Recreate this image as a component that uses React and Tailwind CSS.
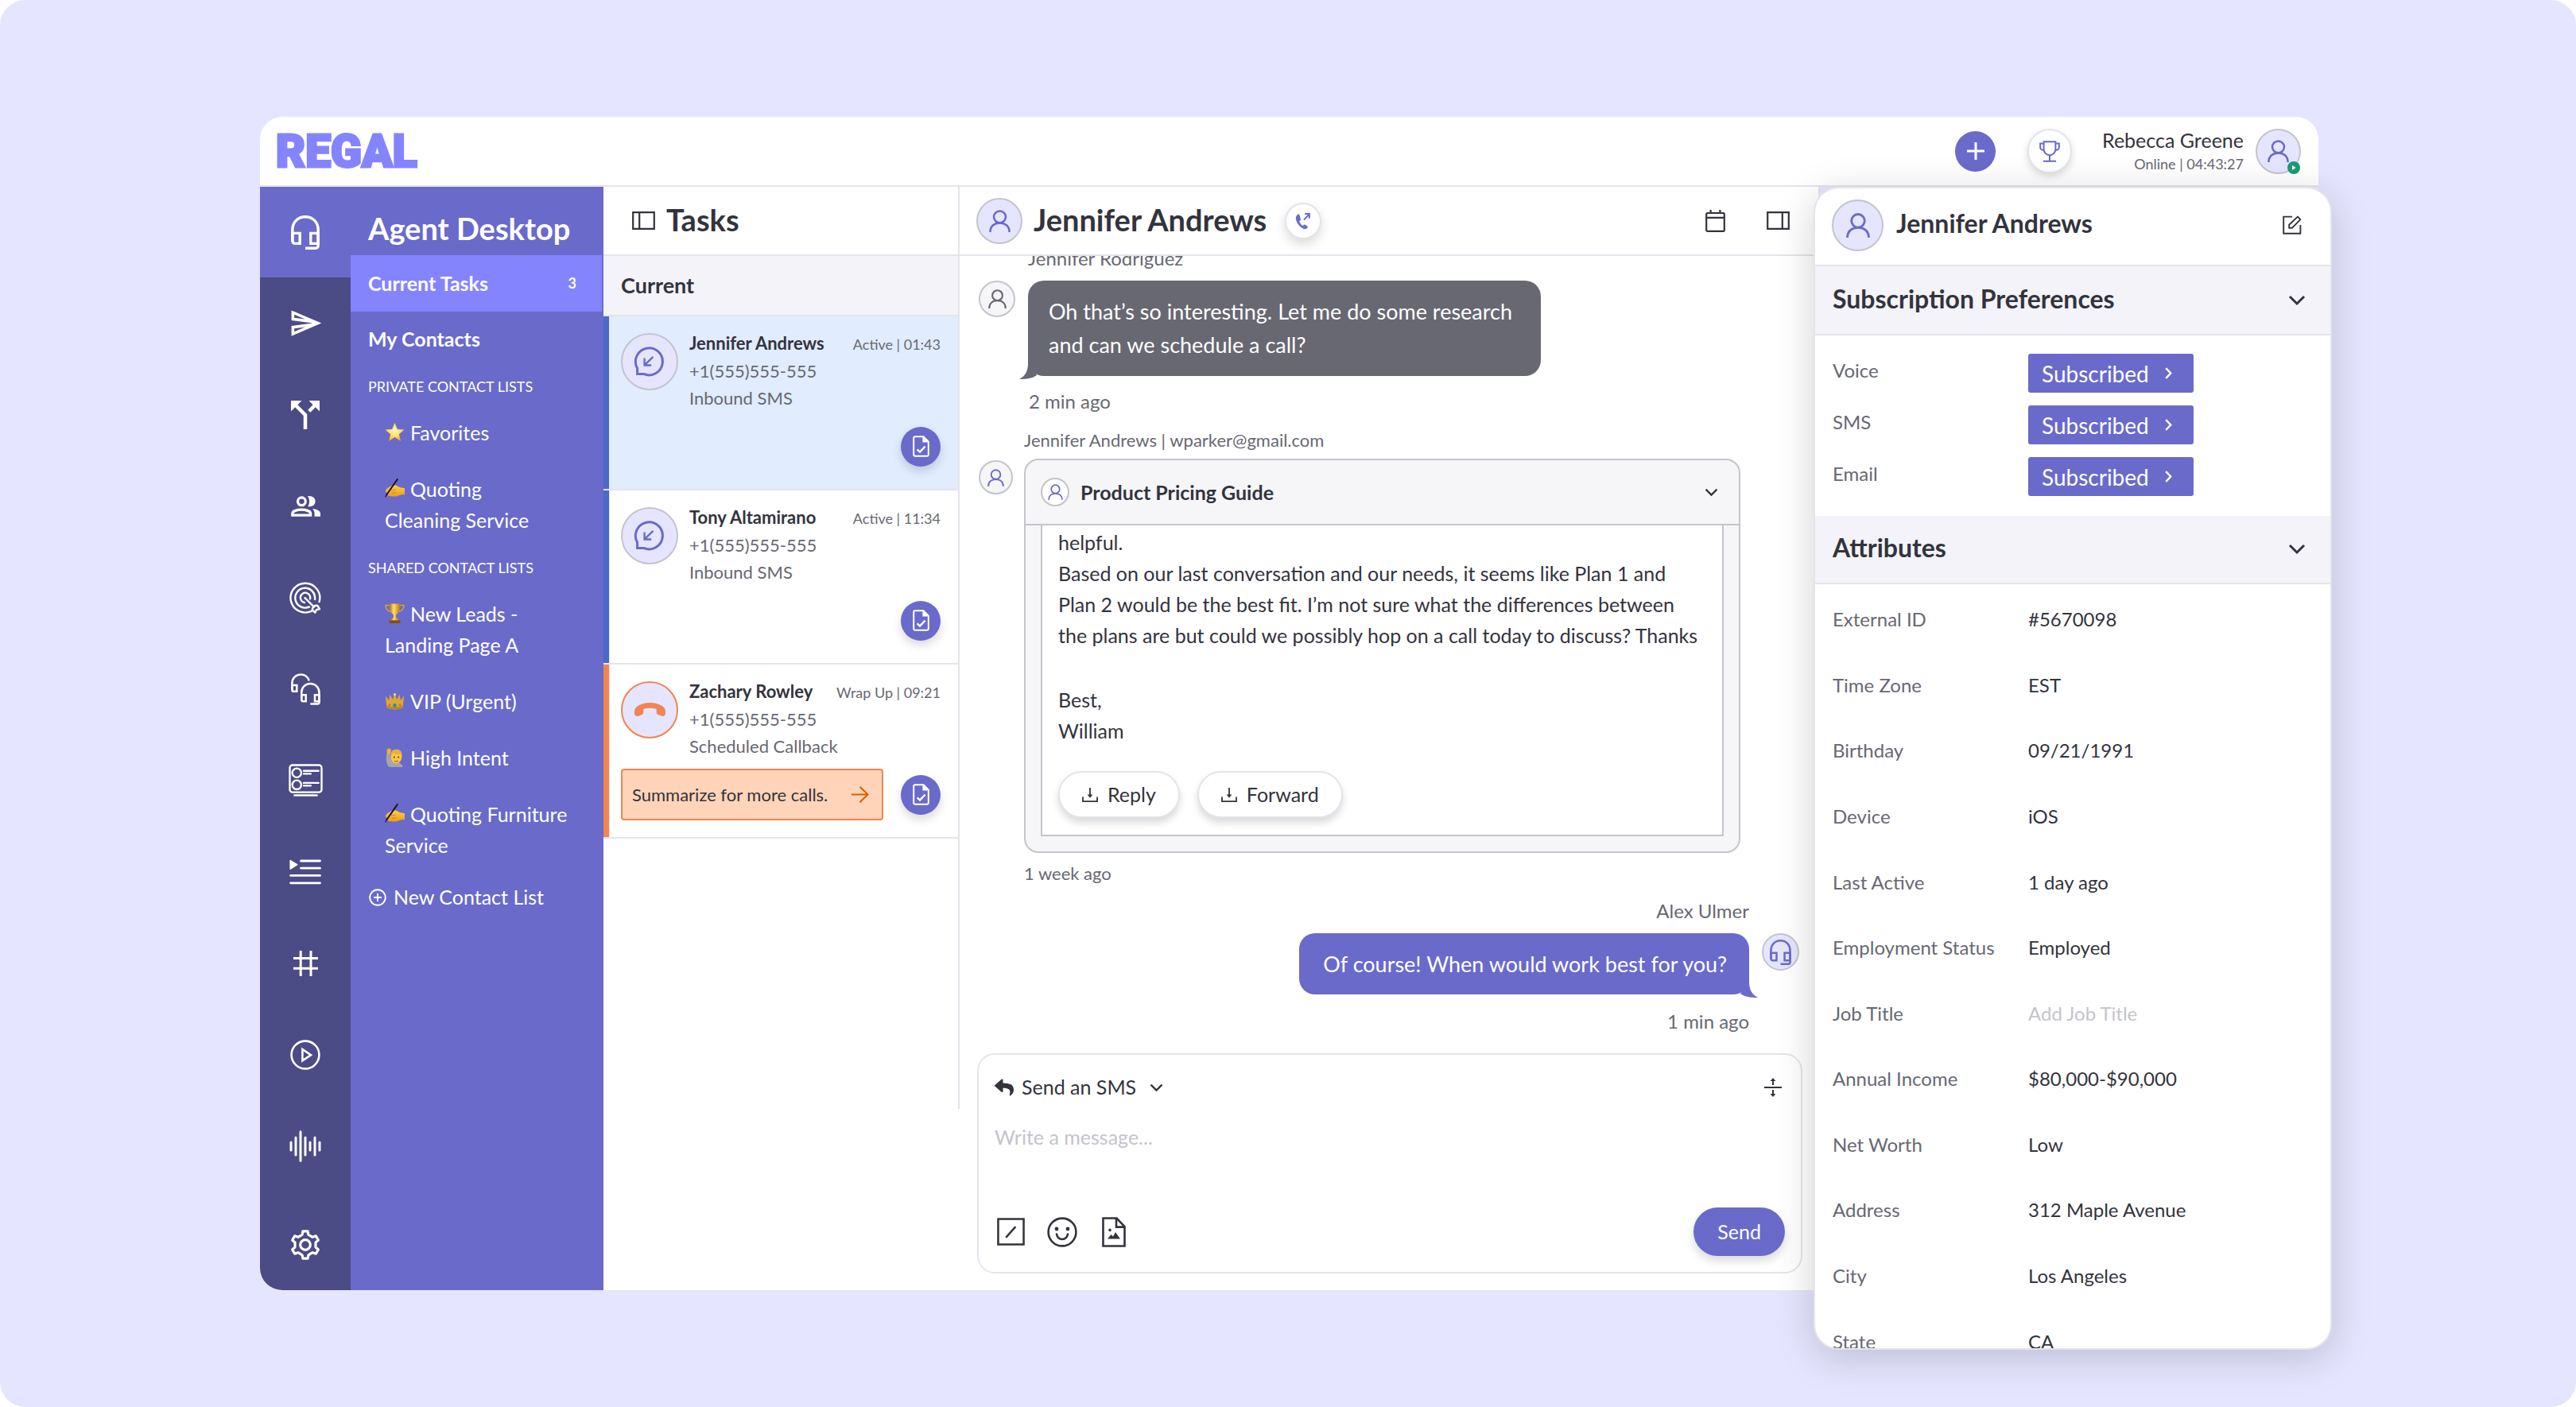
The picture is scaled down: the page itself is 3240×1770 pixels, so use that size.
import { useState } from "react";
import { MdCallSplit, MdOutlineSend } from "react-icons/md";
import { FaReply } from "react-icons/fa";

/* ---------- icons ---------- */

function PersonIcon({ className }) {
  return (
    <svg viewBox="0 0 30 31" fill="none" stroke="currentColor" strokeWidth="2.8" className={className}>
      <circle cx="15" cy="9.8" r="8.3" />
      <path d="M1.6 31C1.6 23 7 18.3 15 18.3S28.4 23 28.4 31" />
    </svg>
  );
}

function HeadsetIcon({ className }) {
  return (
    <svg viewBox="0 0 36 43" fill="none" stroke="currentColor" strokeWidth="3.4" className={className}>
      <path d="M1.8 33V18.5C1.8 8.5 8.5 1.8 18 1.8S34.2 8.5 34.2 18.5V38a3.2 3.2 0 0 1-3.2 3.2H18" />
      <path d="M2 22.4h9.2v13H5a3 3 0 0 1-3-3zM34 22.4h-9.2v13H34z" />
    </svg>
  );
}

function PeopleIcon({ className }) {
  return (
    <svg viewBox="0 0 37 26" fill="none" className={className}>
      <circle cx="13.4" cy="6.8" r="4.9" stroke="currentColor" strokeWidth="3.2" />
      <path d="M1.8 24.2v-2.4c0-3 6.4-4.6 11.4-4.6s11.4 1.6 11.4 4.6v2.4z" stroke="currentColor" strokeWidth="3.2" />
      <path d="M21 .2c6-.8 9.6 2.4 9.6 6.5s-3.6 7.3-9.6 6.5c2.8-3.8 2.8-9.2 0-13z" fill="currentColor" />
      <path d="M27 16c5.4.8 10 2.6 10 6v3.8h-7.4V22c0-2.4-1-4.4-2.6-6z" fill="currentColor" />
    </svg>
  );
}

function GearIcon({ className }) {
  return (
    <svg viewBox="0 0 36 36" fill="none" stroke="currentColor" strokeWidth="3" strokeLinejoin="round" className={className}>
      <path d="M14.3 5.9 15.1 1.8H20.9L21.7 5.9 26.6 8.8 30.6 7.4 33.5 12.4 30.3 15.2V20.8L33.5 23.6 30.6 28.6 26.6 27.2 21.7 30.1 20.9 34.2H15.1L14.3 30.1 9.4 27.2 5.4 28.6 2.5 23.6 5.7 20.8V15.2L2.5 12.4 5.4 7.4 9.4 8.8z" />
      <circle cx="18" cy="18" r="6" />
    </svg>
  );
}

function TargetIcon({ className }) {
  return (
    <svg viewBox="0 0 40 40" fill="none" stroke="currentColor" strokeWidth="2.4" strokeLinecap="round" className={className}>
      <path d="M28 36.6A18.4 18.4 0 1 1 37.6 25" />
      <path d="M25 31.4A12.4 12.4 0 1 1 32 22" />
      <path d="M19 26a6.2 6.2 0 1 1 7-4.6" />
      <path d="M19.5 20.2 31 31.5M31 31.5l-2 1.5v2.6l3.4 3 1.6-3.4 4-1-2.6-4.2-3-.4z" strokeLinejoin="round" />
    </svg>
  );
}

function HeadsetsIcon({ className }) {
  return (
    <svg viewBox="0 0 38 41" fill="none" stroke="currentColor" strokeWidth="2.6" className={className}>
      <path d="M1.5 22V12.5A11 11 0 0 1 12.5 1.5 11 11 0 0 1 23.4 9.5" />
      <path d="M1.5 15.4h6v8h-4a2 2 0 0 1-2-2z" />
      <path d="M13.6 34V24.6A11.4 11.4 0 0 1 25 13.2a11.4 11.4 0 0 1 11.4 11.4v12.8a2 2 0 0 1-2 2H25" />
      <path d="M13.6 28h5.6v8.2h-3.6a2 2 0 0 1-2-2zM36.4 28h-5.6v8.2h5.6z" />
    </svg>
  );
}

function FormIcon({ className }) {
  return (
    <svg viewBox="0 0 44 42" fill="none" stroke="currentColor" strokeWidth="2.4" strokeLinecap="round" className={className}>
      <rect x="1.5" y="1.5" width="41" height="35" rx="3.5" />
      <circle cx="10.5" cy="11.5" r="5.8" />
      <circle cx="10.5" cy="27" r="5.8" />
      <path d="M19.5 9h19M19.5 12.6h9M19.5 24.5h19M19.5 28h9M7.5 40.5h29" />
    </svg>
  );
}

function ListPlayIcon({ className }) {
  return (
    <svg viewBox="0 0 40 32" fill="none" stroke="currentColor" strokeWidth="2.8" strokeLinecap="round" className={className}>
      <path d="M14.5 2H38.5M14.5 11.2H38.5M1.6 20.4H38.5M1.6 29.8H38.5" />
      <path d="M1.2 1.6 9.6 6.8 1.2 12z" fill="currentColor" strokeWidth="1.6" strokeLinejoin="round" />
    </svg>
  );
}

function HashIcon({ className }) {
  return (
    <svg viewBox="0 0 31 32" fill="none" stroke="currentColor" strokeWidth="3" className={className}>
      <path d="M9.2 0v32M22 0v32M0 9.4h31M0 22.2h31" />
    </svg>
  );
}

function PlayIcon({ className }) {
  return (
    <svg viewBox="0 0 38 38" fill="none" stroke="currentColor" strokeWidth="2.6" className={className}>
      <circle cx="19" cy="19" r="17.4" />
      <path d="M15.4 12v14.4L26 19.2z" />
    </svg>
  );
}

function WaveIcon({ className }) {
  return (
    <svg viewBox="0 0 40 40" fill="none" stroke="currentColor" strokeWidth="3" strokeLinecap="round" className={className}>
      <path d="M2 15v10M8 9v22M14 1.8v36.4M20 9v22M26 15v10M32 9v22M38 15v10" />
    </svg>
  );
}

function PanelIcon({ className, side = "left" }) {
  return (
    <svg viewBox="0 0 29 23" fill="none" stroke="currentColor" strokeWidth="2.2" className={className}>
      <path d="M1.2 1.2h26.6v20.6H1.2z" />
      <path d={side === "left" ? "M9.2 1v21" : "M19.8 1v21"} />
    </svg>
  );
}

function CalendarIcon({ className }) {
  return (
    <svg viewBox="0 0 25 28" fill="none" stroke="currentColor" strokeWidth="2.2" className={className}>
      <rect x="1.2" y="4" width="22.6" height="22.8" rx="1.4" />
      <path d="M1 9.8h23M6.6 0v4M18.4 0v4" />
    </svg>
  );
}

function ChevronDown({ className }) {
  return (
    <svg viewBox="0 0 22 14" fill="none" stroke="currentColor" strokeWidth="3" className={className}>
      <path d="m2 2 9 9 9-9" />
    </svg>
  );
}

function ChevronRight({ className }) {
  return (
    <svg viewBox="0 0 9 15" fill="none" stroke="currentColor" strokeWidth="2.4" className={className}>
      <path d="m1.2 1.2 6 6.3-6 6.3" />
    </svg>
  );
}

function SmsInIcon({ className }) {
  return (
    <svg viewBox="0 0 40 40" fill="none" stroke="currentColor" strokeWidth="3" className={className}>
      <path d="M4.6 35.4V28.2A17 17 0 1 1 12.6 35.4z" />
      <path d="M24.5 13.8 13.6 24.4M13.6 15.6v8.9h8.6" strokeWidth="2.4" />
    </svg>
  );
}

function HangUpIcon({ className }) {
  return (
    <svg viewBox="0 0 39 18" fill="currentColor" className={className}>
      <path d="M0 11C0 4 10 0 19.5 0S39 4 39 11v2.5c0 2.2-2 3.8-4.500 3.300l-5-1.800c-1.500-.6-1.800-2-1.800-3.500V8c-5-1.600-11.400-1.600-16.400 0v3.500c0 1.500-.3 2.900-1.800 3.500l-5 2C2 17.500 0 15.700 0 13.500z" />
    </svg>
  );
}

function DocCheckIcon({ className }) {
  return (
    <svg viewBox="0 0 21 27" fill="none" stroke="currentColor" strokeWidth="2" className={className}>
      <path d="M3 1.2h10.5L19.8 7.6V24a1.8 1.8 0 0 1-1.8 1.8H3A1.8 1.8 0 0 1 1.2 24V3A1.8 1.8 0 0 1 3 1.2z" />
      <path d="M12.4 1.2v7.4h7.4z" fill="currentColor" stroke="none" />
      <path d="m5.6 17.4 3.4 3.2 6.6-7" strokeWidth="2.4" />
    </svg>
  );
}

function PhoneOutIcon({ className }) {
  return (
    <svg viewBox="0 0 22 24" fill="none" className={className}>
      <path
        d="M3.2 3.2C.6 5.4.2 8.4 1.8 12.4c2 4.8 5.2 8.4 9.4 10.4 2.8 1 4.8.6 6-1.6.4-1 .2-1.6-.6-2.2l-2.8-1.8c-.8-.4-1.6-.2-2.2.4l-1 1.2c-2.4-1.6-4-3.8-5-6.4l1.3-.9c.7-.6 1-1.2.7-2L6.3 4.4c-.5-1.4-1.7-2.2-3.1-1.2z"
        fill="currentColor"
      />
      <path d="m12 10.5 7-7.5M13.4 2h6.2v6.4" stroke="currentColor" strokeWidth="2.2" />
    </svg>
  );
}

function TrophyIcon({ className }) {
  return (
    <svg viewBox="0 0 26 27" fill="none" stroke="currentColor" strokeWidth="2" className={className}>
      <path d="M5.6 1.2h14.8v9.6a7.4 7.4 0 0 1-14.8 0z" />
      <path d="M5.6 3.4H1.2v5.2c0 1.8 1.8 3.2 4.6 3.6M20.4 3.4h4.4v5.2c0 1.8-1.8 3.2-4.6 3.6M13 18.4v7M5 25.8h16" />
    </svg>
  );
}

function EditIcon({ className }) {
  return (
    <svg viewBox="0 0 24 24" fill="none" stroke="currentColor" strokeWidth="1.9" className={className}>
      <path d="M12 1.6H1.2v21.2h21.2V12" />
      <path d="M8.2 15.8v-4L19 1.6l3.4 3.6-10.6 10.6z" strokeLinejoin="round" />
    </svg>
  );
}

function TrayIcon({ className }) {
  return (
    <svg viewBox="0 0 20 18" fill="none" stroke="currentColor" strokeWidth="1.8" className={className}>
      <path d="M1 11.5v5.6h18v-5.6M10 0v11" />
      <path d="M6.6 8.6h6.8L10 12.8z" fill="currentColor" stroke="none" />
    </svg>
  );
}

function ExpandIcon({ className }) {
  return (
    <svg viewBox="0 0 22 24" fill="none" stroke="currentColor" strokeWidth="2" className={className}>
      <path d="M0 12h22M11 2v7M11 15v7" />
      <path d="M11 0 7.6 4h6.8zM11 24l-3.4-4h6.8z" fill="currentColor" stroke="none" />
    </svg>
  );
}

function SlashIcon({ className }) {
  return (
    <svg viewBox="0 0 36 36" fill="none" stroke="currentColor" strokeWidth="2.6" className={className}>
      <path d="M1.5 1.5h33v33h-33zM11.5 25.5l12.5-14" />
    </svg>
  );
}

function SmileIcon({ className }) {
  return (
    <svg viewBox="0 0 38 38" fill="none" stroke="currentColor" strokeWidth="2.6" className={className}>
      <circle cx="19" cy="19" r="17.4" />
      <path d="M12 21.5c.8 4.4 3.4 6.5 7 6.5s6.2-2.1 7-6.5" strokeLinecap="round" />
      <circle cx="12" cy="15" r="2.4" fill="currentColor" stroke="none" />
      <circle cx="26" cy="15" r="2.4" fill="currentColor" stroke="none" />
    </svg>
  );
}

function ImageFileIcon({ className }) {
  return (
    <svg viewBox="0 0 30 38" fill="none" stroke="currentColor" strokeWidth="2.6" className={className}>
      <path d="M1.5 1.5h17L28.5 12v24.5h-27zM18 1.5V12.6h10.5" />
      <path d="M7 27.5 11.5 22l2.5 2.5 3-5.5 6 8.5z" fill="currentColor" stroke="none" />
      <circle cx="10" cy="16.4" r="1.8" fill="currentColor" stroke="none" />
    </svg>
  );
}

function ArrowRightIcon({ className }) {
  return (
    <svg viewBox="0 0 22 21" fill="none" stroke="currentColor" strokeWidth="2" className={className}>
      <path d="M0 10.5h20.5M10.5.8l10 9.7-10 9.7" />
    </svg>
  );
}

function PlusCircleIcon({ className }) {
  return (
    <svg viewBox="0 0 22 22" fill="none" stroke="currentColor" strokeWidth="1.9" className={className}>
      <circle cx="11" cy="11" r="9.8" />
      <path d="M11 6v10M6 11h10" />
    </svg>
  );
}

/* ---------- list emblems ---------- */

function StarEmblem() {
  return (
    <svg viewBox="0 0 25 25" className="size-[25px]">
      <defs>
        <radialGradient id="star" cx="50%" cy="42%" r="60%">
          <stop offset="0" stopColor="#FFF9C4" />
          <stop offset=".55" stopColor="#FFDF5A" />
          <stop offset="1" stopColor="#F2A516" />
        </radialGradient>
      </defs>
      <path d="m12.5.8 3.3 8.3 8.9.5-6.9 5.7 2.3 8.7-7.6-4.9L4.9 24l2.3-8.7L.3 9.6l8.9-.5z" fill="url(#star)" />
    </svg>
  );
}

function WritingEmblem() {
  return (
    <svg viewBox="0 0 25 25" className="size-[25px]">
      <defs>
        <linearGradient id="hand" x1="0" y1="0" x2="0" y2="1">
          <stop offset="0" stopColor="#FFD04A" />
          <stop offset="1" stopColor="#EE9A1B" />
        </linearGradient>
      </defs>
      <path d="M.8 15.5C1.8 12.8 5 10.8 8.5 9.2l3.5-.6c1.8-.4 3.4.4 4.6 1.4 2.2 1.2 5.4 1.800 8.400 2.200v8.200c-3.600-.2-6.200.4-8.800 1.600-3.600 1-8.400.6-12-.6z" fill="url(#hand)" />
      <path d="M8 14.5c2 .5 4 .2 6-.8M8.5 18c2.500.4 4.500 0 6-1" stroke="#C9780F" strokeWidth=".8" fill="none" />
      <path d="M15.8 1 2.5 20" stroke="#14141A" strokeWidth="2" strokeLinecap="round" />
      <path d="M2.6 19.5.8 23" stroke="#14141A" strokeWidth="1.2" strokeLinecap="round" />
    </svg>
  );
}

function CupEmblem() {
  return (
    <svg viewBox="0 0 25 25" className="size-[25px]">
      <defs>
        <linearGradient id="cup" x1="0" x2="1">
          <stop offset="0" stopColor="#A96A08" />
          <stop offset=".4" stopColor="#FFDE6B" />
          <stop offset="1" stopColor="#B87708" />
        </linearGradient>
      </defs>
      <path d="M6 2.5H1C1 7 3.5 10 9 10.5M19 2.5h5C24 7 21.5 10 16 10.5" fill="none" stroke="#E0A52B" strokeWidth="1.4" />
      <path d="M5.5.5h14c0 7-1.5 11.5-5.5 14V19h-3v-4.500C7 12 5.500 7.500 5.500.5z" fill="url(#cup)" />
      <path d="M8.5 18.5h8l1 3h-10z" fill="url(#cup)" />
      <path d="M5.5 21.5h14V25h-14z" fill="#8C4A12" />
    </svg>
  );
}

function CrownEmblem() {
  return (
    <svg viewBox="0 0 25 25" className="size-[25px]">
      <path d="M.8 6.5 5.2 12 6.5 4.5 9.8 11l2.700-7 2.700 7 3.300-6.500L19.800 12l4.400-5.500-1.700 15c-6 2.600-14 2.600-20 0z" fill="#DBAA32" />
      <path d="M2.3 18.5c6 2.5 14.4 2.5 20.4 0v3c-6 2.6-14 2.6-20 0z" fill="#B98A20" />
      <circle cx="12.5" cy="4.8" r="1.7" fill="#F6D873" />
      <circle cx="12.5" cy="18.5" r="2.4" fill="#1F9C78" />
      <circle cx="6" cy="17.8" r="1.5" fill="#E0529B" />
      <circle cx="19" cy="17.8" r="1.5" fill="#E0529B" />
    </svg>
  );
}

function HandUpEmblem() {
  return (
    <svg viewBox="0 0 25 25" className="size-[25px]">
      <path d="M2.5 8C1 15 2 22 5.5 25h17c0-3.500-3-5-7-5.500C9 18.500 7 14 6.500 8z" fill="#A5A5AE" />
      <path d="M2.8 8.5 2.5 2l1.700 1L5 .2l1.300 2.400L8 2 7 8.500z" fill="#F2B430" />
      <ellipse cx="14.5" cy="12.5" rx="6.8" ry="7.8" fill="#FFC83D" />
      <path d="M7.4 12C6.8 5 10 2.8 14.5 2.8S22.200 5 21.600 12l-1.600-3.600c-3 1-7 .8-10-.5z" fill="#E9AE48" />
      <path d="M12 17.2c1.5.9 3.5.9 5 0" stroke="#8C4A12" strokeWidth="1" fill="none" />
      <circle cx="11.8" cy="12.5" r="1" fill="#4A2C12" />
      <circle cx="17.2" cy="12.5" r="1" fill="#4A2C12" />
    </svg>
  );
}

/* ---------- data ---------- */

const railItems = [
  { label: "Send", icon: MdOutlineSend, size: "size-[43px]" },
  { label: "Routing", icon: MdCallSplit, size: "size-[54px]" },
  { label: "Contacts", icon: PeopleIcon, size: "w-[37px] h-[26px]" },
  { label: "Campaigns", icon: TargetIcon, size: "size-10" },
  { label: "Agents", icon: HeadsetsIcon, size: "w-[37px] h-10" },
  { label: "Forms", icon: FormIcon, size: "w-[43px] h-[41px]" },
  { label: "Queue", icon: ListPlayIcon, size: "w-10 h-8" },
  { label: "Channels", icon: HashIcon, size: "w-[31px] h-8" },
  { label: "Recordings", icon: PlayIcon, size: "size-[38px]" },
  { label: "Voice", icon: WaveIcon, size: "size-10" },
];

const privateLists = [
  { name: "Favorites", emblem: StarEmblem },
  { name: "Quoting Cleaning Service", emblem: WritingEmblem, narrow: true },
];

const sharedLists = [
  { name: "New Leads - Landing Page A", emblem: CupEmblem, narrow: true },
  { name: "VIP (Urgent)", emblem: CrownEmblem },
  { name: "High Intent", emblem: HandUpEmblem },
  { name: "Quoting Furniture Service", emblem: WritingEmblem },
];

const tasks = [
  { name: "Jennifer Andrews", status: "Active | 01:43", kind: "Inbound SMS", selected: true },
  { name: "Tony Altamirano", status: "Active | 11:34", kind: "Inbound SMS" },
  { name: "Zachary Rowley", status: "Wrap Up | 09:21", kind: "Scheduled Callback", wrapUp: true },
];

const attributes = [
  ["External ID", "#5670098"],
  ["Time Zone", "EST"],
  ["Birthday", "09/21/1991"],
  ["Device", "iOS"],
  ["Last Active", "1 day ago"],
  ["Employment Status", "Employed"],
  ["Job Title", ""],
  ["Annual Income", "$80,000-$90,000"],
  ["Net Worth", "Low"],
  ["Address", "312 Maple Avenue"],
  ["City", "Los Angeles"],
  ["State", "CA"],
];

/* ---------- pieces ---------- */

function TopBar() {
  return (
    <header className="flex h-[88px] shrink-0 items-center rounded-t-[28px] border-b-2 border-[#E4E4EC] bg-white pr-[22px] pl-5">
      <h1 className="font-['Roboto',sans-serif] text-[57px] leading-none font-black text-[#8484FF] [-webkit-text-stroke:3px_#8484FF]">REGAL</h1>
      <div className="ml-auto flex items-center">
        <button type="button" aria-label="New" className="flex size-[51px] items-center justify-center rounded-full bg-[#6A6ACA] text-white">
          <svg viewBox="0 0 22 22" stroke="currentColor" strokeWidth="3" className="size-[22px]">
            <path d="M11 0v22M0 11h22" />
          </svg>
        </button>
        <button type="button" aria-label="Leaderboard" className="ml-10 flex size-14 items-center justify-center rounded-full border-2 border-[#E4E4EC] bg-white text-[#6A6ACA] shadow-[0_4px_10px_rgba(0,0,0,0.15)]">
          <TrophyIcon className="h-[27px] w-[26px]" />
        </button>
        <div className="ml-[38px] text-right">
          <p className="text-[25px] leading-8 text-[#33333D]">Rebecca Greene</p>
          <p className="text-[18px] leading-7 text-[#686872]">Online | 04:43:27</p>
        </div>
        <div className="relative ml-[15px] flex size-[57px] items-center justify-center rounded-full border-2 border-[#C4C4CC] bg-[#E5E5FF] text-[#6A6ACA]">
          <PersonIcon className="h-7 w-[27px]" />
          <span className="absolute -right-[1px] -bottom-[2px] flex size-4 items-center justify-center rounded-full bg-[#1A9C77]">
            <svg viewBox="0 0 6 6" fill="white" className="size-[6px]">
              <path d="M1 0v6l4.5-3z" />
            </svg>
          </span>
        </div>
      </div>
    </header>
  );
}

function Rail() {
  return (
    <nav aria-label="Main" className="flex w-[114px] shrink-0 flex-col rounded-bl-[28px] bg-[#4B4B85] text-white">
      <button type="button" aria-label="Agent Desktop" className="flex h-[114px] items-center justify-center bg-[#6A6ACA]">
        <HeadsetIcon className="h-[43px] w-9" />
      </button>
      {railItems.map(({ label, icon: Icon, size }) => (
        <button key={label} type="button" aria-label={label} className="flex h-[115px] items-center justify-center">
          <Icon className={size} />
        </button>
      ))}
      <button type="button" aria-label="Settings" className="mt-auto flex h-[115px] items-center justify-center">
        <GearIcon className="size-[38px]" />
      </button>
    </nav>
  );
}

function ContactList({ name, emblem: Emblem, narrow }) {
  return (
    <li>
      <a href="#list" className={`block py-4 pl-[43px] text-[25px] leading-[39px] ${narrow ? "pr-[70px]" : "pr-5"}`}>
        <span className="mr-[7px] inline-block align-[-2px]">
          <Emblem />
        </span>
        {name}
      </a>
    </li>
  );
}

function ListPanel() {
  return (
    <div className="w-[318px] shrink-0 bg-[#6A6ACA] text-white">
      <h2 className="flex h-[86px] items-center pt-[18px] pl-[22px] text-[38px] leading-none font-bold">Agent Desktop</h2>
      <a href="#current" className="mr-[2px] flex h-[71px] items-center justify-between bg-[#8484FF] pr-8 pl-[22px] text-[25px] font-bold">
        Current Tasks
        <span className="text-[18px]">3</span>
      </a>
      <a href="#contacts" className="flex h-[70px] items-center pl-[22px] text-[25px] font-bold">
        My Contacts
      </a>
      <h3 className="flex h-[47px] items-center pt-[2px] pl-[22px] text-[18px]">PRIVATE CONTACT LISTS</h3>
      <ul>
        {privateLists.map((list) => (
          <ContactList key={list.name} {...list} />
        ))}
      </ul>
      <h3 className="flex h-[47px] items-center pt-[2px] pl-[22px] text-[18px]">SHARED CONTACT LISTS</h3>
      <ul>
        {sharedLists.map((list) => (
          <ContactList key={list.name} {...list} />
        ))}
      </ul>
      <button type="button" className="flex h-[60px] items-center gap-[9px] pl-[23px] text-[25px]">
        <PlusCircleIcon className="size-[22px]" />
        New Contact List
      </button>
    </div>
  );
}

function Task({ name, status, kind, selected, wrapUp }) {
  return (
    <li className={`flex h-[219px] border-b-2 border-[#E4E4EC] ${selected ? "bg-[#E1ECFF]" : "bg-white"}`}>
      <div className={`w-2 shrink-0 border-r border-[#E4E4EC] ${wrapUp ? "bg-[#F28452]" : "bg-[#4B69CA]"}`} />
      <div className="flex flex-1 flex-col pt-[17px] pr-[22px] pb-[21px] pl-[14px]">
        <div className="flex">
          <div
            className={`mt-1 flex size-[72px] shrink-0 items-center justify-center rounded-full border-2 bg-[#E5E5FF] ${
              wrapUp ? "border-[#F28452] text-[#F28452]" : "border-[#C4C4CC] text-[#6A6ACA]"
            }`}
          >
            {wrapUp ? <HangUpIcon className="h-[18px] w-[39px]" /> : <SmsInIcon className="size-10" />}
          </div>
          <div className="ml-[14px] flex-1 text-[22px] leading-[34px] text-[#686872]">
            <div className="flex items-baseline justify-between">
              <h4 className="font-bold text-[#33333D]">{name}</h4>
              <span className="text-[18px]">{status}</span>
            </div>
            <p>+1(555)555-555</p>
            <p>{kind}</p>
          </div>
        </div>
        <div className="mt-auto flex h-[65px] items-center justify-end gap-[22px]">
          {wrapUp && (
            <button type="button" className="flex h-full flex-1 items-center justify-between rounded-sm border-2 border-[#F28452] bg-[#FFD4B8] pr-4 pl-3 text-[22px] text-[#33333D]">
              Summarize for more calls.
              <ArrowRightIcon className="h-[21px] w-[22px] text-[#D95F00]" />
            </button>
          )}
          <button type="button" aria-label={`Complete ${name}`} className="flex size-[50px] items-center justify-center rounded-full bg-[#6A6ACA] text-white shadow-[0_6px_12px_rgba(0,0,0,0.15)]">
            <DocCheckIcon className="h-[27px] w-[21px]" />
          </button>
        </div>
      </div>
    </li>
  );
}

function TaskColumn() {
  return (
    <section className="w-[448px] shrink-0 bg-white">
      <div className="min-h-[1160px] border-r-2 border-[#E4E4EC]">
        <div className="flex h-[87px] items-center border-b-2 border-[#E4E4EC] pl-9">
          <button type="button" aria-label="Collapse tasks">
            <PanelIcon className="h-[23px] w-[29px]" />
          </button>
          <h2 className="ml-[14px] pb-1 text-[38px] leading-none font-bold">Tasks</h2>
        </div>
        <h3 className="flex h-[76px] items-center border-b-2 border-[#E4E4EC] bg-[#F3F3F9] pl-[22px] text-[27px] font-bold">Current</h3>
        <ul>
          {tasks.map((task) => (
            <Task key={task.name} {...task} />
          ))}
        </ul>
      </div>
    </section>
  );
}

function ChatHeader() {
  return (
    <div className="flex h-[87px] shrink-0 items-center border-b-2 border-[#E4E4EC] pr-9 pl-[21px]">
      <div className="flex size-[58px] items-center justify-center rounded-full border-2 border-[#C4C4CC] bg-[#E5E5FF] text-[#6A6ACA]">
        <PersonIcon className="h-7 w-[27px]" />
      </div>
      <h2 className="ml-[14px] pb-1 text-[38px] leading-none font-bold">Jennifer Andrews</h2>
      <button type="button" aria-label="Call" className="ml-[23px] flex size-[46px] items-center justify-center rounded-full border-2 border-[#E4E4EC] bg-white text-[#6A6ACA] shadow-[0_6px_14px_rgba(0,0,0,0.15)]">
        <PhoneOutIcon className="h-[22px] w-5" />
      </button>
      <button type="button" aria-label="Schedule" className="ml-auto">
        <CalendarIcon className="h-7 w-[25px]" />
      </button>
      <button type="button" aria-label="Toggle details" className="ml-[52px]">
        <PanelIcon side="right" className="h-[23px] w-[29px]" />
      </button>
    </div>
  );
}

function EmailCard() {
  return (
    <article className="mr-[74px] flex-1 rounded-[18px] border-2 border-[#C4C4CC] bg-[#F6F6F9]">
      <header className="flex h-[82px] items-center border-b-2 border-[#C4C4CC] pr-[26px] pl-[19px]">
        <div className="flex size-9 items-center justify-center rounded-full border-2 border-[#C4C4CC] bg-white text-[#6A6ACA]">
          <PersonIcon className="h-5 w-[19px]" />
        </div>
        <h3 className="ml-[14px] text-[25px] font-bold">Product Pricing Guide</h3>
        <button type="button" aria-label="Collapse email" className="ml-auto">
          <ChevronDown className="h-[11px] w-[17px]" />
        </button>
      </header>
      <div className="mx-[19px] mb-[19px] border-x-2 border-b-2 border-[#C4C4CC] bg-white px-5 pt-[2px] pb-[21px] text-[25px] leading-[39px]">
        <p>helpful.</p>
        <p>
          Based on our last conversation and our needs, it seems like Plan 1 and
          <br />
          Plan 2 would be the best fit. I’m not sure what the differences between
          <br />
          the plans are but could we possibly hop on a call today to discuss? Thanks
        </p>
        <p className="mt-[42px]">
          Best,
          <br />
          William
        </p>
        <div className="mt-[31px] flex gap-[22px]">
          {["Reply", "Forward"].map((action) => (
            <button
              key={action}
              type="button"
              className="flex h-[59px] items-center gap-3 rounded-full border-2 border-[#E4E4EC] bg-white px-7 shadow-[0_6px_10px_rgba(0,0,0,0.15)]"
            >
              <TrayIcon className="h-[18px] w-5" />
              {action}
            </button>
          ))}
        </div>
      </div>
    </article>
  );
}

function Messages() {
  return (
    <div className="flex min-h-0 flex-1 flex-col justify-end overflow-hidden pr-6 pb-[25px] pl-6 text-[24px] leading-[30px] text-[#686872]">
      <p className="pl-[62px]">Jennifer Rodriguez</p>
      <div className="mt-[13px] flex items-start gap-4">
        <div className="flex size-[46px] items-center justify-center rounded-full border-2 border-[#C4C4CC] bg-[#F6F6F9]">
          <PersonIcon className="h-6 w-[23px]" />
        </div>
        <div className="relative rounded-[20px] bg-[#686872] py-[18px] pr-9 pl-[26px] text-[27px] leading-[42px] text-white">
          Oh that’s so interesting. Let me do some research
          <br />
          and can we schedule a call?
          <svg viewBox="0 0 30 30" fill="#686872" className="absolute -bottom-1 -left-[11px] size-[30px]">
            <path d="M11 4V10C11 19 8 26 0 30c9 0 17-1 22-5z" />
          </svg>
        </div>
      </div>
      <p className="mt-[17px] pl-[63px]">2 min ago</p>

      <p className="mt-[19px] pl-[57px] text-[22px]">Jennifer Andrews | wparker@gmail.com</p>
      <div className="mt-2 flex items-start gap-[14px] text-[#33333D]">
        <div className="mt-[2px] flex size-[43px] items-center justify-center rounded-full border-2 border-[#C4C4CC] bg-[#F6F6F9] text-[#6A6ACA]">
          <PersonIcon className="h-[22px] w-[21px]" />
        </div>
        <EmailCard />
      </div>
      <p className="mt-[11px] pl-[57px] text-[22px]">1 week ago</p>

      <p className="mt-[17px] pr-[63px] text-right">Alex Ulmer</p>
      <div className="mt-[13px] flex items-start justify-end gap-4">
        <div className="relative rounded-[20px] bg-[#6A6ACA] py-[18px] pr-7 pl-[30px] text-[27px] leading-[41px] text-white">
          Of course! When would work best for you?
          <svg viewBox="0 0 30 30" fill="#6A6ACA" className="absolute -right-[11px] -bottom-1 size-[30px]">
            <path d="M19 4V10C19 19 22 26 30 30c-9 0-17-1-22-5z" />
          </svg>
        </div>
        <div className="flex size-[47px] items-center justify-center rounded-full border-2 border-[#C4C4CC] bg-[#E5E5FF] text-[#6A6ACA]">
          <HeadsetIcon className="h-8 w-[27px]" />
        </div>
      </div>
      <p className="mt-[19px] pr-[63px] text-right">1 min ago</p>
    </div>
  );
}

function Composer() {
  const [text, setText] = useState("");

  return (
    <form onSubmit={(e) => e.preventDefault()} className="mr-5 mb-[21px] ml-[22px] shrink-0 rounded-[22px] border-2 border-[#E4E4EC] px-5 pt-[21px] pb-5 text-[25px]">
      <div className="flex h-10 items-center">
        <FaReply className="size-6" />
        <label className="ml-[10px] flex items-center">
          <select aria-label="Channel" className="appearance-none bg-transparent">
            <option>Send an SMS</option>
          </select>
          <ChevronDown className="ml-4 h-[11px] w-[17px]" />
        </label>
        <button type="button" aria-label="Expand" className="ml-auto mr-1">
          <ExpandIcon className="h-6 w-[22px]" />
        </button>
      </div>
      <textarea
        aria-label="Message"
        placeholder="Write a message..."
        value={text}
        onChange={(e) => setText(e.target.value)}
        className="mt-[23px] block h-[108px] w-full resize-none leading-[39px] outline-none placeholder:text-[#C4C4CC]"
      />
      <div className="flex items-center pl-[3px]">
        <button type="button" aria-label="Insert template">
          <SlashIcon className="size-[35px]" />
        </button>
        <button type="button" aria-label="Insert emoji" className="ml-7">
          <SmileIcon className="size-[38px]" />
        </button>
        <button type="button" aria-label="Attach image" className="ml-[31px]">
          <ImageFileIcon className="h-[38px] w-[30px]" />
        </button>
        <button type="submit" className="ml-auto h-[61px] rounded-full bg-[#6A6ACA] px-[30px] text-white shadow-[0_6px_12px_rgba(0,0,0,0.15)]">
          Send
        </button>
      </div>
    </form>
  );
}

function SectionTitle({ children, className = "" }) {
  return (
    <button type="button" className={`flex w-full shrink-0 items-center justify-between border-b-2 border-[#E4E4EC] bg-[#F3F3F9] pr-[31px] pl-[22px] ${className}`}>
      <h3 className="pb-1 text-[32px] font-bold">{children}</h3>
      <ChevronDown className="h-[14px] w-[22px]" />
    </button>
  );
}

function ContactPanel() {
  return (
    <aside className="relative z-10 -mr-[17px] -mb-[75px] -ml-2 flex w-[652px] shrink-0 flex-col overflow-hidden rounded-[32px] border-2 border-[#E4E4EC] bg-white shadow-[0_10px_50px_rgba(0,0,0,0.18)]">
      <div className="flex h-[96px] shrink-0 items-center pr-9 pb-1 pl-[21px]">
        <div className="flex size-[65px] items-center justify-center rounded-full border-2 border-[#C4C4CC] bg-[#E5E5FF] text-[#6A6ACA]">
          <PersonIcon className="h-[31px] w-[30px]" />
        </div>
        <h2 className="ml-4 pb-1 text-[32px] font-bold">Jennifer Andrews</h2>
        <button type="button" aria-label="Edit contact" className="ml-auto">
          <EditIcon className="size-6" />
        </button>
      </div>
      <SectionTitle className="h-[89px] border-t-2">Subscription Preferences</SectionTitle>
      <div className="flex shrink-0 flex-col gap-4 pt-[23px] pb-[25px] pl-[22px] text-[24px]">
        {["Voice", "SMS", "Email"].map((channel) => (
          <div key={channel} className="flex items-start">
            <span className="w-[246px] leading-[41px] text-[#686872]">{channel}</span>
            <button type="button" aria-label={`${channel}: Subscribed`} className="flex h-[49px] w-[208px] items-center rounded-[3px] bg-[#6A6ACA] pl-[17px] text-[28px] text-white">
              Subscribed
              <ChevronRight className="ml-5 h-[15px] w-[9px]" />
            </button>
          </div>
        ))}
      </div>
      <SectionTitle className="h-[86px]">Attributes</SectionTitle>
      <table className="mt-[3px] ml-[22px] h-[991px] shrink-0 text-left text-[24px]">
        <tbody>
          {attributes.map(([label, value]) => (
            <tr key={label}>
              <th scope="row" className="w-[246px] p-0 font-normal text-[#686872]">
                {label}
              </th>
              <td className="p-0">
                {value || <input aria-label={label} placeholder={`Add ${label}`} className="w-60 outline-none placeholder:text-[#C4C4CC]" />}
              </td>
            </tr>
          ))}
        </tbody>
      </table>
    </aside>
  );
}

export default function App() {
  return (
    <div className="h-screen bg-white font-['Lato',sans-serif] text-[#33333D]">
      <div className="flex h-full flex-col rounded-[32px] bg-[#E5E5FF] pt-[147px] pr-[324px] pb-[147px] pl-[327px]">
        <TopBar />
        <main className="flex min-h-0 flex-1">
          <Rail />
          <ListPanel />
          <TaskColumn />
          <section className="flex min-w-0 flex-1 flex-col border-r-2 border-[#E4E4EC] bg-white">
            <ChatHeader />
            <Messages />
            <Composer />
          </section>
          <ContactPanel />
        </main>
      </div>
    </div>
  );
}
